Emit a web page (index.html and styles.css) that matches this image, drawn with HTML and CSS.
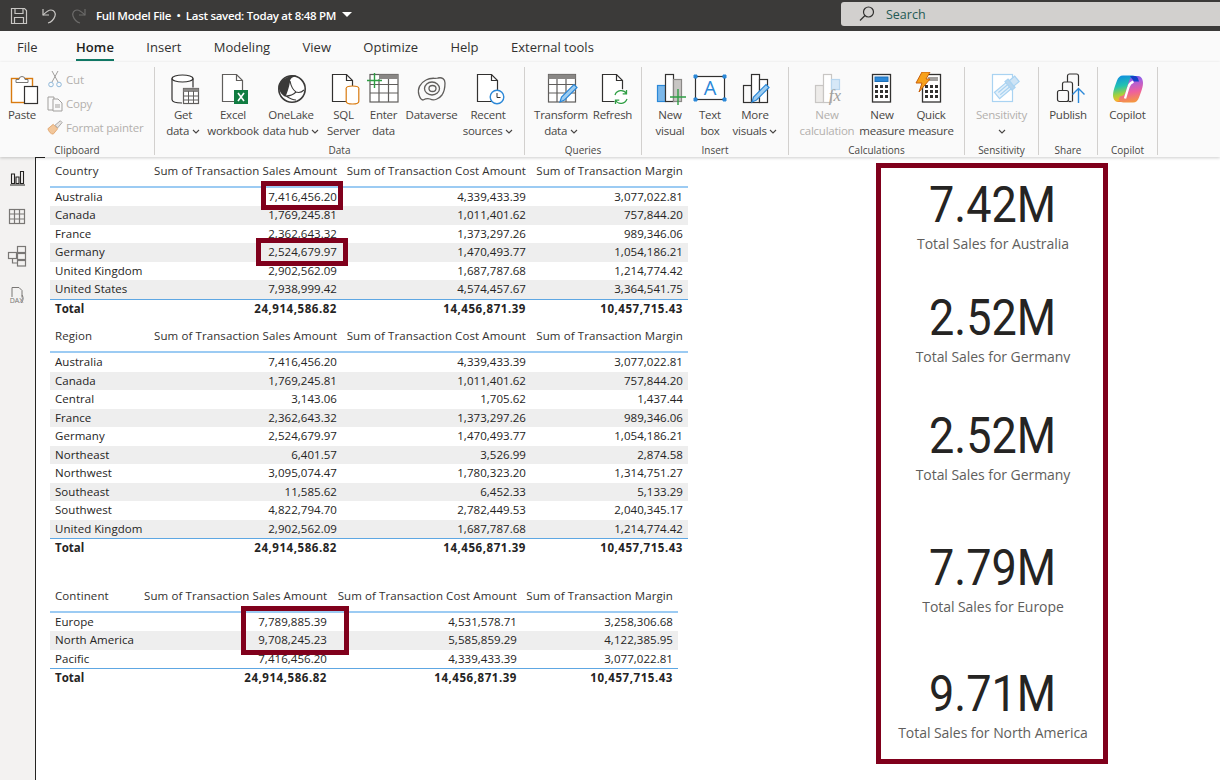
FILE: index.html
```html
<!DOCTYPE html>
<html lang="en">
<head>
    <meta charset="UTF-8">
    <title>Full Model File</title>
    <link rel="stylesheet" href="styles.css">
</head>
<body>
    <div id="titleBar">
        <svg class="qat" width="18" height="18" viewBox="0 0 18 18" fill="none" stroke="#c8c6c4" stroke-width="1.2"><path d="M1.500 1.500h13l2 2v13h-15z"/><path d="M5 1.500v5h8v-5M4.500 16.500v-6h9v6"/></svg>
        <svg class="qat" width="18" height="18" viewBox="0 0 18 18" fill="none" stroke="#c8c6c4" stroke-width="1.2"><path d="M3 2v6h6"/><path d="M3 8c3-3 5-5 8-5s5 3 4 6-3 6-7 7"/></svg>
        <svg class="qat" width="18" height="18" viewBox="0 0 18 18" fill="none" stroke="#6b6a69" stroke-width="1.2"><path d="M15 2v6H9"/><path d="M15 8c-3-3-5-5-8-5S2 6 3 9s3 6 7 7"/></svg>
        <span class="file-name">Full Model File &nbsp;•&nbsp; Last saved: Today at 8:48 PM</span>
        <span class="file-caret"></span>
        <div class="search-box">
            <svg width="18" height="18" viewBox="0 0 18 18" fill="none" stroke="#323130" stroke-width="1.2"><circle cx="10.500" cy="7" r="5"/><path d="M7 10.500l-5 5"/></svg>
            <span>Search</span>
        </div>
    </div>

    <div id="tabs">
        <span class="tab first">File</span>
        <span class="tab active">Home</span>
        <span class="tab">Insert</span>
        <span class="tab">Modeling</span>
        <span class="tab">View</span>
        <span class="tab">Optimize</span>
        <span class="tab">Help</span>
        <span class="tab">External tools</span>
    </div>

    <div id="ribbon">
        <div class="group clipboard">
            <div class="group-body">
                <div class="btn">
                    <svg class="icon" viewBox="0 0 36 36" fill="none"><rect x="7.500" y="6.500" width="21" height="24" fill="#fff" stroke="#d97b0f" stroke-width="1.400"/><path d="M12 7.500h3a3 3 0 0 1 6 0h3v3H12z" fill="#fff" stroke="#797775"/><rect x="20.500" y="14.500" width="13" height="17" fill="#fff" stroke="#323130" stroke-width="1.200"/></svg>
                    <div class="label">Paste</div>
                </div>
                <div class="small-col">
                    <div class="small-btn"><svg width="16" height="18" viewBox="0 0 16 18" fill="none" stroke="#a19f9d"><path d="M5 1l6 11M11 1L5 12"/><circle cx="4" cy="14.500" r="2.300" stroke="#8fb8d9"/><circle cx="12" cy="14.500" r="2.300" stroke="#8fb8d9"/></svg>Cut</div>
                    <div class="small-btn"><svg width="16" height="18" viewBox="0 0 16 18" fill="none" stroke="#a19f9d"><path d="M1 3h6v13H1z"/><path d="M6 5h5l4 4v8H6z" fill="#fafafa"/><path d="M8 11h5M8 13h5"/></svg>Copy</div>
                    <div class="small-btn"><svg width="16" height="18" viewBox="0 0 18 18" fill="none"><path d="M1 11l6-5 5 5-5 6c-3 0-5-3-6-6z" fill="#f2c79b" stroke="#e0a56e"/><path d="M9 7l6-5 2 2-5 6z" fill="#e6e4e2" stroke="#a19f9d"/></svg>Format painter</div>
                </div>
            </div>
            <div class="group-label">Clipboard</div>
        </div>

        <div class="group data">
            <div class="group-body">
                <div class="btn">
                    <svg class="icon" viewBox="0 0 36 36" fill="none" stroke="#323130" stroke-width="1.200"><ellipse cx="17.500" cy="6.500" rx="10.500" ry="3.500" fill="#fff"/><path d="M7 6.500v21c0 2 3 3.500 10 3.500M28 6.500v9"/><rect x="18.500" y="16.500" width="15" height="15" fill="#fff" stroke="#605e5c"/><rect x="18.500" y="16.500" width="15" height="3.500" fill="#8a8886" stroke="none"/><path d="M18.500 24h15M18.500 28h15M23.500 19v12M28.500 19v12" stroke="#605e5c" stroke-width="1"/></svg>
                    <div class="label">Get<br>data <svg class="chev" viewBox="0 0 8 5"><path d="M1 1l3 3 3-3"/></svg></div>
                </div>
                <div class="btn">
                    <svg class="icon" viewBox="0 0 36 36" fill="none" stroke="#605e5c" stroke-width="1.200"><path d="M7.500 2.500h14l6 6v21h-20z" fill="#fff"/><path d="M21.500 2.500v6h6"/><rect x="19" y="18" width="14" height="14" fill="#107c41" stroke="none"/><path d="M23 21l6 8M29 21l-6 8" stroke="#fff" stroke-width="1.600"/></svg>
                    <div class="label">Excel<br>workbook</div>
                </div>
                <div class="btn">
                    <svg class="icon" viewBox="0 0 36 36" fill="none"><circle cx="19" cy="17" r="13.200" fill="#fff" stroke="#3b3a39" stroke-width="1.600"/><path d="M14 5.500c3-2.500 9-3 10-1-4 0-7 1.500-7 5.500-1 6-3 11-4.500 15-3-1.500-6-5-7-9.500 0-4 4-8 8.500-10z" fill="#3b3a39"/><path d="M17 9c1 5 3 9 6 11 3 1 6 0 8-2M23 20c-3 3-7 4-10 4M13 24c3 2 6 4 10 4" stroke="#3b3a39" stroke-width="1.100"/></svg>
                    <div class="label">OneLake<br>data hub <svg class="chev" viewBox="0 0 8 5"><path d="M1 1l3 3 3-3"/></svg></div>
                </div>
                <div class="btn">
                    <svg class="icon" viewBox="0 0 36 36" fill="none" stroke="#323130" stroke-width="1.200"><path d="M6.500 2.500h14l6 6v21h-20z" fill="#fff"/><path d="M20.500 2.500v6h6"/><ellipse cx="26.500" cy="16.500" rx="6.300" ry="2.500" fill="#fff" stroke="#d97b0f"/><path d="M20.200 16.500v13c0 1.500 2.500 2.500 6.300 2.500s6.300-1 6.300-2.500v-13" fill="#fff" stroke="#d97b0f"/></svg>
                    <div class="label">SQL<br>Server</div>
                </div>
                <div class="btn">
                    <svg class="icon" viewBox="0 0 36 36" fill="none" stroke="#605e5c" stroke-width="1.200"><rect x="4" y="2.500" width="28" height="27.500" fill="#fff"/><rect x="13" y="2.500" width="19" height="4.500" fill="#8a8886" stroke="none"/><path d="M4 12.500h28M4 21h28M13 7v23M22.500 7v23"/><path d="M8.500 1v15M1 8.500h15" stroke="#2f9e44" stroke-width="1.400"/></svg>
                    <div class="label">Enter<br>data</div>
                </div>
                <div class="btn">
                    <svg class="icon" viewBox="0 0 36 36" fill="none" stroke="#605e5c" stroke-width="1.300"><path d="M5 23c-2-6 1-12 7-15 5-3 9-1 12-2 4-1 7 1 7 5 0 5-1 9-3 12-3 4-8 6-12 4-3-1-5 0-7 1-2 0-3-2-4-5z"/><ellipse cx="18" cy="16.500" rx="7.500" ry="6.500"/><ellipse cx="18.500" cy="16.500" rx="3.500" ry="3"/></svg>
                    <div class="label">Dataverse</div>
                </div>
                <div class="btn">
                    <svg class="icon" viewBox="0 0 36 36" fill="none" stroke="#323130" stroke-width="1.200"><path d="M7.500 2.500h14l6 6v21h-20z" fill="#fff"/><path d="M21.500 2.500v6h6"/><circle cx="27" cy="25" r="6.800" fill="#fff" stroke="#2b88d8" stroke-width="1.400"/><path d="M27 21v4.500h3.500" stroke-width="1"/></svg>
                    <div class="label">Recent<br>sources <svg class="chev" viewBox="0 0 8 5"><path d="M1 1l3 3 3-3"/></svg></div>
                </div>
            </div>
            <div class="group-label">Data</div>
        </div>

        <div class="group queries">
            <div class="group-body">
                <div class="btn">
                    <svg class="icon" viewBox="0 0 36 36" fill="none" stroke="#605e5c" stroke-width="1.200"><rect x="5.500" y="2.500" width="27" height="27.500" fill="#fff"/><rect x="5.500" y="2.500" width="27" height="4.500" fill="#8a8886" stroke="none"/><path d="M5.500 12.500h27M5.500 21h27M14 7v23M23 7v23"/><path d="M17 30l1.500-5L31 12.500l3 3L21.500 28z" fill="#9fcdf0" stroke="#2b88d8"/></svg>
                    <div class="label">Transform<br>data <svg class="chev" viewBox="0 0 8 5"><path d="M1 1l3 3 3-3"/></svg></div>
                </div>
                <div class="btn">
                    <svg class="icon" viewBox="0 0 36 36" fill="none" stroke="#323130" stroke-width="1.200"><path d="M7.500 2.500h14l6 6v21h-20z" fill="#fff"/><path d="M21.500 2.500v6h6"/><circle cx="26" cy="25" r="8" fill="#fff" stroke="none"/><path d="M20 23a6.500 6.500 0 0 1 11.500-1.500M32 27a6.500 6.500 0 0 1-11.500 1.500M31.500 18v3.800h-3.800M20.500 32v-3.800h3.800" stroke="#2f9e44" stroke-width="1.300"/></svg>
                    <div class="label">Refresh</div>
                </div>
            </div>
            <div class="group-label">Queries</div>
        </div>

        <div class="group insert">
            <div class="group-body">
                <div class="btn">
                    <svg class="icon" viewBox="0 0 36 36" fill="none" stroke="#323130" stroke-width="1.200"><rect x="5.500" y="13.500" width="8" height="16" fill="#7cb8ea" stroke="#2b88d8"/><rect x="13.500" y="2.500" width="8" height="27" fill="#fff"/><rect x="21.500" y="7.500" width="8" height="22" fill="#c8c6c4" stroke="#8a8886"/><path d="M26 17v16M18 25h16" stroke="#2f9e44" stroke-width="1.400"/></svg>
                    <div class="label">New<br>visual</div>
                </div>
                <div class="btn">
                    <svg class="icon" viewBox="0 0 36 36" fill="none"><rect x="3.500" y="4.500" width="29" height="23" fill="#fff" stroke="#323130" stroke-width="1.200"/><path d="M2 3h3v3H2zM31 3h3v3h-3zM2 26h3v3H2zM31 26h3v3h-3z" fill="#2b88d8" stroke="#2b88d8"/><text x="18" y="23" text-anchor="middle" class="icon-letter">A</text></svg>
                    <div class="label">Text<br>box</div>
                </div>
                <div class="btn">
                    <svg class="icon" viewBox="0 0 36 36" fill="none" stroke="#323130" stroke-width="1.200"><rect x="6.500" y="13.500" width="8" height="17"/><rect x="14.500" y="2.500" width="8" height="28" fill="#fff"/><rect x="22.500" y="7.500" width="8" height="23" fill="#fff"/><path d="M15 30l1.500-5L29 12.500l3 3L19.500 28z" fill="#9fcdf0" stroke="#2b88d8"/></svg>
                    <div class="label">More<br>visuals <svg class="chev" viewBox="0 0 8 5"><path d="M1 1l3 3 3-3"/></svg></div>
                </div>
            </div>
            <div class="group-label">Insert</div>
        </div>

        <div class="group calcs">
            <div class="group-body">
                <div class="btn off">
                    <svg class="icon" viewBox="0 0 36 36" fill="none" stroke="#c8c6c4" stroke-width="1.200"><rect x="6.500" y="13.500" width="8" height="17" fill="#edebe9"/><rect x="14.500" y="2.500" width="8" height="28" fill="#fff"/><rect x="22.500" y="7.500" width="8" height="10" fill="#d6e8f7" stroke="#b8d6ee"/><text x="26" y="29" text-anchor="middle" class="icon-fx">fx</text></svg>
                    <div class="label">New<br>calculation</div>
                </div>
                <div class="btn">
                    <svg class="icon" viewBox="0 0 36 36" fill="none"><rect x="8.500" y="2.500" width="18" height="27.500" fill="#fff" stroke="#323130" stroke-width="1.300"/><rect x="11" y="5" width="13" height="4.500" fill="#2b88d8" stroke="#1d6fb8"/><path d="M11 13h3v3h-3zM16 13h3v3h-3zM21 13h3v3h-3zM11 18h3v3h-3zM16 18h3v3h-3zM21 18h3v3h-3zM11 23h3v3h-3zM16 23h3v3h-3zM21 23h3v3h-3z" fill="#323130"/></svg>
                    <div class="label">New<br>measure</div>
                </div>
                <div class="btn">
                    <svg class="icon" viewBox="0 0 36 36" fill="none"><rect x="9.500" y="2.500" width="18" height="27.500" fill="#fff" stroke="#323130" stroke-width="1.300"/><rect x="15" y="5" width="10" height="4" fill="#a19f9d"/><path d="M12 13h3v3h-3zM17 13h3v3h-3zM22 13h3v3h-3zM12 18h3v3h-3zM17 18h3v3h-3zM22 18h3v3h-3zM12 23h3v3h-3zM17 23h3v3h-3zM22 23h3v3h-3z" fill="#323130"/><path d="M9 0h8l-4 7h4L6 20l3-9H3z" fill="#f7a11a" stroke="#c8600c"/></svg>
                    <div class="label">Quick<br>measure</div>
                </div>
            </div>
            <div class="group-label">Calculations</div>
        </div>

        <div class="group sens">
            <div class="group-body">
                <div class="btn off">
                    <svg class="icon" viewBox="0 0 36 36" fill="none" stroke="#a9d3f2" stroke-width="1.200"><rect x="8.500" y="2.500" width="20" height="27" fill="#fff"/><g transform="rotate(-40 22 14)"><rect x="9" y="11.500" width="17" height="8" fill="#e3f0fa"/><path d="M12 14h12M12 17h12"/><rect x="24" y="10" width="4" height="11" fill="#b8d6ee"/><rect x="28" y="12" width="7" height="7" fill="#cfe4f5"/></g></svg>
                    <div class="label">Sensitivity<br><svg class="chev" viewBox="0 0 8 5"><path d="M1 1l3 3 3-3"/></svg></div>
                </div>
            </div>
            <div class="group-label">Sensitivity</div>
        </div>

        <div class="group share">
            <div class="group-body">
                <div class="btn">
                    <svg class="icon" viewBox="0 0 36 36" fill="none" stroke="#323130" stroke-width="1.200"><path d="M17.500 10V4a2 2 0 0 1 2-2h7a2 2 0 0 1 2 2v10"/><path d="M12.500 18v-6a2 2 0 0 1 2-2h6a2 2 0 0 1 2 2v17.500"/><rect x="7.500" y="18.500" width="11" height="11" rx="2" fill="#fafafa"/><path d="M18.500 29.500h3"/><path d="M28.500 31V16.500M22.500 22.500l6-6 6 6" stroke="#2b88d8" stroke-width="1.400"/></svg>
                    <div class="label">Publish</div>
                </div>
            </div>
            <div class="group-label">Share</div>
        </div>

        <div class="group copilot">
            <div class="group-body">
                <div class="btn">
                    <svg class="icon" viewBox="0 0 36 36" fill="none">
                        <defs>
                            <linearGradient id="copA" x1="0.350" y1="0" x2="0.550" y2="1"><stop offset="0" stop-color="#0f8fe0"/><stop offset=".38" stop-color="#23c3b0"/><stop offset=".68" stop-color="#a5d13c"/><stop offset=".88" stop-color="#f5b52e"/><stop offset="1" stop-color="#ee4d4d"/></linearGradient>
                            <linearGradient id="copB" x1="0.400" y1="0" x2="0.550" y2="1"><stop offset="0" stop-color="#f59a3a"/><stop offset=".4" stop-color="#ee5f9e"/><stop offset=".8" stop-color="#a660e0"/><stop offset="1" stop-color="#6a5be8"/></linearGradient>
                        </defs>
                        <path d="M26 9.500c-3 .5-5 2-6 5.500l-3 10c-1 3-3 5-6 5H8c-3 0-5-3-5-7 0-3 1-6 2-9l2-5.500c1-3 3-5 6-5h9.500c2.500 0 3.500 1 4.700 3z" fill="url(#copA)"/>
                        <path d="M26 9.500c-3 .5-5 2-6 5.500l-3 10c-1 3-3 5-6 5H8c-3 0-5-3-5-7 0-3 1-6 2-9l2-5.500c1-3 3-5 6-5h9.500c2.500 0 3.500 1 4.700 3z" fill="url(#copB)" transform="rotate(180 18 17)"/>
                        <path d="M15 26.500l3.500-11.500c.8-3 2.500-4.500 5-5.300" stroke="#fff" stroke-width="2.400"/>
                        <path d="M20 4h5c1.500 0 2.500 1 3.500 4l.5 1.500h-5z" fill="#1440c8"/>
                    </svg>
                    <div class="label">Copilot</div>
                </div>
            </div>
            <div class="group-label">Copilot</div>
        </div>
    </div>

    <div id="workspace">
        <div id="rail">
            <svg width="20" height="20" viewBox="0 0 20 20" fill="none" stroke="#252423" stroke-width="1.100"><path d="M3 18h15M4.500 7v9.500h3V7zM9 10v6.500h3V10zM13.500 4.500v12h3v-12z"/></svg>
            <svg width="20" height="20" viewBox="0 0 20 20" fill="none" stroke="#797775" stroke-width="1.200"><rect x="2.500" y="3.500" width="15" height="14"/><path d="M2.500 8h15M2.500 13h15M7.500 3.500v14M12.500 3.500v14"/></svg>
            <svg width="20" height="22" viewBox="0 0 20 22" fill="none" stroke="#797775" stroke-width="1.200"><rect x="10.500" y="1.500" width="8" height="6"/><rect x="1.500" y="7.500" width="8" height="6"/><rect x="10.500" y="8.500" width="8" height="6"/><rect x="10.500" y="15.500" width="8" height="5.500"/><path d="M5.500 13.500v4.500h5M9.500 10.500h1"/></svg>
            <svg width="20" height="20" viewBox="0 0 20 20" fill="none" stroke="#797775"><path d="M5 11V1.500h7l3 3v7"/><path d="M15 9c2 3 1 6-1 8"/><text x="9.500" y="17" text-anchor="middle" class="rail-dax">DAX</text></svg>
        </div>

        <div id="canvas">
            <div class="tables">
                <div class="visual">
                    <table class="matrix">
                        <thead>
                            <tr><th>Country</th><th>Sum of Transaction Sales Amount</th><th>Sum of Transaction Cost Amount</th><th>Sum of Transaction Margin</th></tr>
                        </thead>
                        <tbody>
                            <tr><td>Australia</td><td>7,416,456.20</td><td>4,339,433.39</td><td>3,077,022.81</td></tr>
                            <tr><td>Canada</td><td>1,769,245.81</td><td>1,011,401.62</td><td>757,844.20</td></tr>
                            <tr><td>France</td><td>2,362,643.32</td><td>1,373,297.26</td><td>989,346.06</td></tr>
                            <tr><td>Germany</td><td>2,524,679.97</td><td>1,470,493.77</td><td>1,054,186.21</td></tr>
                            <tr><td>United Kingdom</td><td>2,902,562.09</td><td>1,687,787.68</td><td>1,214,774.42</td></tr>
                            <tr><td>United States</td><td>7,938,999.42</td><td>4,574,457.67</td><td>3,364,541.75</td></tr>
                        </tbody>
                        <tfoot>
                            <tr><td>Total</td><td>24,914,586.82</td><td>14,456,871.39</td><td>10,457,715.43</td></tr>
                        </tfoot>
                    </table>
                    <div class="hl hl-australia"></div>
                    <div class="hl hl-germany"></div>
                </div>

                <div class="visual region">
                    <table class="matrix">
                        <thead>
                            <tr><th>Region</th><th>Sum of Transaction Sales Amount</th><th>Sum of Transaction Cost Amount</th><th>Sum of Transaction Margin</th></tr>
                        </thead>
                        <tbody>
                            <tr><td>Australia</td><td>7,416,456.20</td><td>4,339,433.39</td><td>3,077,022.81</td></tr>
                            <tr><td>Canada</td><td>1,769,245.81</td><td>1,011,401.62</td><td>757,844.20</td></tr>
                            <tr><td>Central</td><td>3,143.06</td><td>1,705.62</td><td>1,437.44</td></tr>
                            <tr><td>France</td><td>2,362,643.32</td><td>1,373,297.26</td><td>989,346.06</td></tr>
                            <tr><td>Germany</td><td>2,524,679.97</td><td>1,470,493.77</td><td>1,054,186.21</td></tr>
                            <tr><td>Northeast</td><td>6,401.57</td><td>3,526.99</td><td>2,874.58</td></tr>
                            <tr><td>Northwest</td><td>3,095,074.47</td><td>1,780,323.20</td><td>1,314,751.27</td></tr>
                            <tr><td>Southeast</td><td>11,585.62</td><td>6,452.33</td><td>5,133.29</td></tr>
                            <tr><td>Southwest</td><td>4,822,794.70</td><td>2,782,449.53</td><td>2,040,345.17</td></tr>
                            <tr><td>United Kingdom</td><td>2,902,562.09</td><td>1,687,787.68</td><td>1,214,774.42</td></tr>
                        </tbody>
                        <tfoot>
                            <tr><td>Total</td><td>24,914,586.82</td><td>14,456,871.39</td><td>10,457,715.43</td></tr>
                        </tfoot>
                    </table>
                </div>

                <div class="visual continent">
                    <table class="matrix">
                        <thead>
                            <tr><th>Continent</th><th>Sum of Transaction Sales Amount</th><th>Sum of Transaction Cost Amount</th><th>Sum of Transaction Margin</th></tr>
                        </thead>
                        <tbody>
                            <tr><td>Europe</td><td>7,789,885.39</td><td>4,531,578.71</td><td>3,258,306.68</td></tr>
                            <tr><td>North America</td><td>9,708,245.23</td><td>5,585,859.29</td><td>4,122,385.95</td></tr>
                            <tr><td>Pacific</td><td>7,416,456.20</td><td>4,339,433.39</td><td>3,077,022.81</td></tr>
                        </tbody>
                        <tfoot>
                            <tr><td>Total</td><td>24,914,586.82</td><td>14,456,871.39</td><td>10,457,715.43</td></tr>
                        </tfoot>
                    </table>
                    <div class="hl hl-continent"></div>
                </div>
            </div>

            <div class="cards">
                <div class="card"><div class="card-value"><span>7.42M</span></div><div class="card-label">Total Sales for Australia</div></div>
                <div class="card"><div class="card-value"><span>2.52M</span></div><div class="card-label">Total Sales for Germany</div></div>
                <div class="card"><div class="card-value"><span>2.52M</span></div><div class="card-label">Total Sales for Germany</div></div>
                <div class="card"><div class="card-value"><span>7.79M</span></div><div class="card-label">Total Sales for Europe</div></div>
                <div class="card"><div class="card-value"><span>9.71M</span></div><div class="card-label">Total Sales for North America</div></div>
            </div>
        </div>
    </div>
</body>
</html>
```

FILE: styles.css
```css
* {
    box-sizing: border-box;
}

body {
    margin: 0;
    width: 1220px;
    height: 780px;
    overflow: hidden;
    background: #fff;
    color: #252423;
    font-family: 'Open Sans', 'Noto Sans', sans-serif;
    display: flex;
    flex-direction: column;
}

/* title bar */
#titleBar {
    height: 31px;
    flex: none;
    background: #3b3a39;
    display: flex;
    align-items: center;
    padding-left: 10px;
    color: #fff;
}

.qat {
    margin-right: 12px;
}

.file-name {
    font-size: 11.5px;
    font-weight: 600;
    letter-spacing: -0.3px;
    margin-left: -4px;
    width: 246px;
    white-space: nowrap;
}

.file-caret {
    width: 0;
    height: 0;
    margin: -3px 0 0 0;
    border-left: 5px solid transparent;
    border-right: 5px solid transparent;
    border-top: 5px solid #fff;
}

.search-box {
    margin-left: auto;
    width: 379px;
    height: 24px;
    margin-top: -3px;
    background: #d2d0ce;
    border-radius: 3px 0 0 3px;
    display: flex;
    align-items: center;
    padding-left: 17px;
    gap: 10px;
    font-size: 12.5px;
    color: #245a54;
}

/* tabs */
#tabs {
    height: 31px;
    flex: none;
    background: #fafafa;
    display: flex;
    gap: 32.4px;
    padding-left: 17px;
    font-size: 13px;
}

.tab {
    height: 31px;
    padding-top: 7px;
    color: #323130;
}

.tab.first {
    margin-right: 6px;
}

.tab.active {
    color: #201f1e;
    font-weight: 600;
    letter-spacing: 0.1px;
    box-shadow: inset 0 -1px 0 #fafafa, inset 0 -3px 0 #117865;
}

/* ribbon */
#ribbon {
    height: 95px;
    flex: none;
    background: #fafafa;
    display: flex;
    padding-top: 5px;
    box-shadow: 0 1px 3px rgba(0, 0, 0, 0.2);
    position: relative;
    z-index: 2;
    font-size: 11.5px;
    color: #484644;
}

.group {
    height: 88px;
    flex: none;
    border-right: 1px solid #d2d0ce;
    display: flex;
    flex-direction: column;
}

.group-body {
    height: 76px;
    flex: none;
    display: grid;
    padding-top: 5px;
}

.group-label {
    flex: none;
    text-align: center;
    font-size: 10px;
    line-height: 14px;
    color: #484644;
}

.clipboard { width: 155px; }
.clipboard .group-body { grid-template-columns: 44px 1fr; }
.clipboard .btn { margin-left: 0; }
.data { width: 370px; }
.data .group-body { grid-template-columns: 46px 54px 62px 43px 37px 59px 54px; padding-left: 5px; }
.queries { width: 117px; }
.queries .group-body { grid-template-columns: 60px 43px; padding-left: 6px; }
.insert { width: 147px; }
.insert .group-body { grid-template-columns: 40px 40px 50px; padding-left: 8px; }
.calcs { width: 176px; }
.calcs .group-body { grid-template-columns: 60px 50px 48px; padding-left: 8px; }
.sens { width: 74px; }
.share { width: 59px; }
.copilot { width: 60px; }
.sens .group-body, .share .group-body, .copilot .group-body { grid-template-columns: 1fr; }

.btn {
    display: flex;
    flex-direction: column;
    align-items: center;
    white-space: nowrap;
    min-width: 0;
}

.icon {
    width: 36px;
    height: 36px;
    flex: none;
}

.label {
    margin-top: -1px;
    line-height: 16px;
    text-align: center;
    letter-spacing: -0.25px;
}

.off .label {
    color: #b3b0ad;
}

.chev {
    width: 8px;
    height: 5px;
    fill: none;
    stroke: #484644;
    stroke-width: 1.100;
    vertical-align: 1px;
}

.small-col {
    display: flex;
    flex-direction: column;
    gap: 6px;
    margin: -2px 0 0 3px;
}

.small-btn {
    height: 18px;
    display: flex;
    align-items: center;
    gap: 3px;
    color: #b3b0ad;
    white-space: nowrap;
    letter-spacing: -0.2px;
}

.icon-letter {
    font-family: 'Open Sans', sans-serif;
    font-size: 20px;
    fill: #2b88d8;
}

.icon-fx {
    font-family: 'Liberation Serif', serif;
    font-style: italic;
    font-size: 17px;
    fill: #a19f9d;
    stroke: none;
}

/* rail + canvas */
#workspace {
    flex: 1;
    display: flex;
    min-height: 0;
}

#rail {
    width: 36px;
    flex: none;
    background: #f3f2f1;
    border-right: 1px solid #252423;
    display: flex;
    flex-direction: column;
    align-items: center;
    padding: 10px 2px 0 0;
    gap: 19px;
}

.rail-dax {
    font-family: 'Open Sans', sans-serif;
    font-size: 7px;
    fill: #797775;
    stroke: none;
}

#canvas {
    flex: 1;
    position: relative;
    display: flex;
    justify-content: space-between;
    padding: 5.5px 112px 0 14px;
}

/* little corner of the page edge */
#canvas::before {
    content: "";
    position: absolute;
    left: 0;
    top: 0;
    width: 9px;
    height: 1px;
    background: #252423;
}

.visual {
    position: relative;
    width: 638px;
}

.visual.region {
    margin-top: 10.5px;
}

.visual.continent {
    margin-top: 30.5px;
}

.matrix {
    width: 638px;
    border-collapse: separate;
    border-spacing: 0;
    table-layout: fixed;
    font-size: 11.5px;
    letter-spacing: 0.05px;
}

.continent .matrix {
    width: 628px;
}

.matrix th {
    height: 25px;
    padding: 0 4px 8px;
    font-weight: 400;
    letter-spacing: 0.1px;
    color: #323130;
    text-align: right;
    border-bottom: 2px solid #9ccbf3;
    white-space: nowrap;
}

.matrix td {
    height: 18.5px;
    padding: 0 4px;
    text-align: right;
    line-height: 18px;
    white-space: nowrap;
}

.matrix th:nth-child(1),
.matrix td:nth-child(1) {
    text-align: left;
    padding-left: 5px;
}

.matrix th:nth-child(4),
.matrix td:nth-child(4) {
    padding-right: 5px;
}

.matrix th:nth-child(1) { width: 100px; }
.matrix th:nth-child(2) { width: 191px; }
.matrix th:nth-child(3) { width: 189px; }
.matrix th:nth-child(4) { width: 158px; }

.continent .matrix th:nth-child(1) { width: 90px; }
.continent .matrix th:nth-child(2) { width: 191px; }
.continent .matrix th:nth-child(3) { width: 190px; }
.continent .matrix th:nth-child(4) { width: 157px; }

.matrix tbody tr:nth-child(even) td {
    background: #eeeeee;
}

.matrix tfoot td {
    height: 19px;
    font-weight: 700;
    letter-spacing: 0.55px;
    border-top: 1.5px solid #5ea7e3;
    color: #252423;
}

.matrix tfoot td:nth-child(1) {
    letter-spacing: 0;
}

.hl {
    position: absolute;
    border: 5px solid #80001c;
}

.hl-australia { left: 211px; top: 18.5px; width: 82px; height: 29px; }
.hl-germany { left: 206px; top: 75.5px; width: 92px; height: 28px; }
.hl-continent { left: 191px; top: 18.5px; width: 108px; height: 49px; }

/* cards */
.cards {
    width: 232px;
    height: 601px;
    margin-top: 0.5px;
    border: 5px solid #80001c;
    display: flex;
    flex-direction: column;
    align-items: center;
    padding: 12px 0 0 2px;
    color: #252423;
}

.card {
    width: 100%;
    flex: none;
    text-align: center;
}

.card:nth-child(1) { height: 113px; }
.card:nth-child(2) { height: 118px; }
.card:nth-child(3) { height: 132px; }
.card:nth-child(4) { height: 126px; }
.card:nth-child(5) { height: 80px; }

.card-value {
    height: 50px;
    line-height: 50px;
    font-family: Roboto, sans-serif;
    font-size: 50px;
}

.card-value span {
    display: inline-block;
    transform: scaleX(0.9);
}

.card-label {
    margin-top: 4px;
    line-height: 20px;
    font-size: 14px;
    letter-spacing: -0.05px;
    color: #605e5c;
    white-space: nowrap;
}

.card:nth-child(2) .card-label {
    height: 16px;
    overflow: hidden;
}
```
